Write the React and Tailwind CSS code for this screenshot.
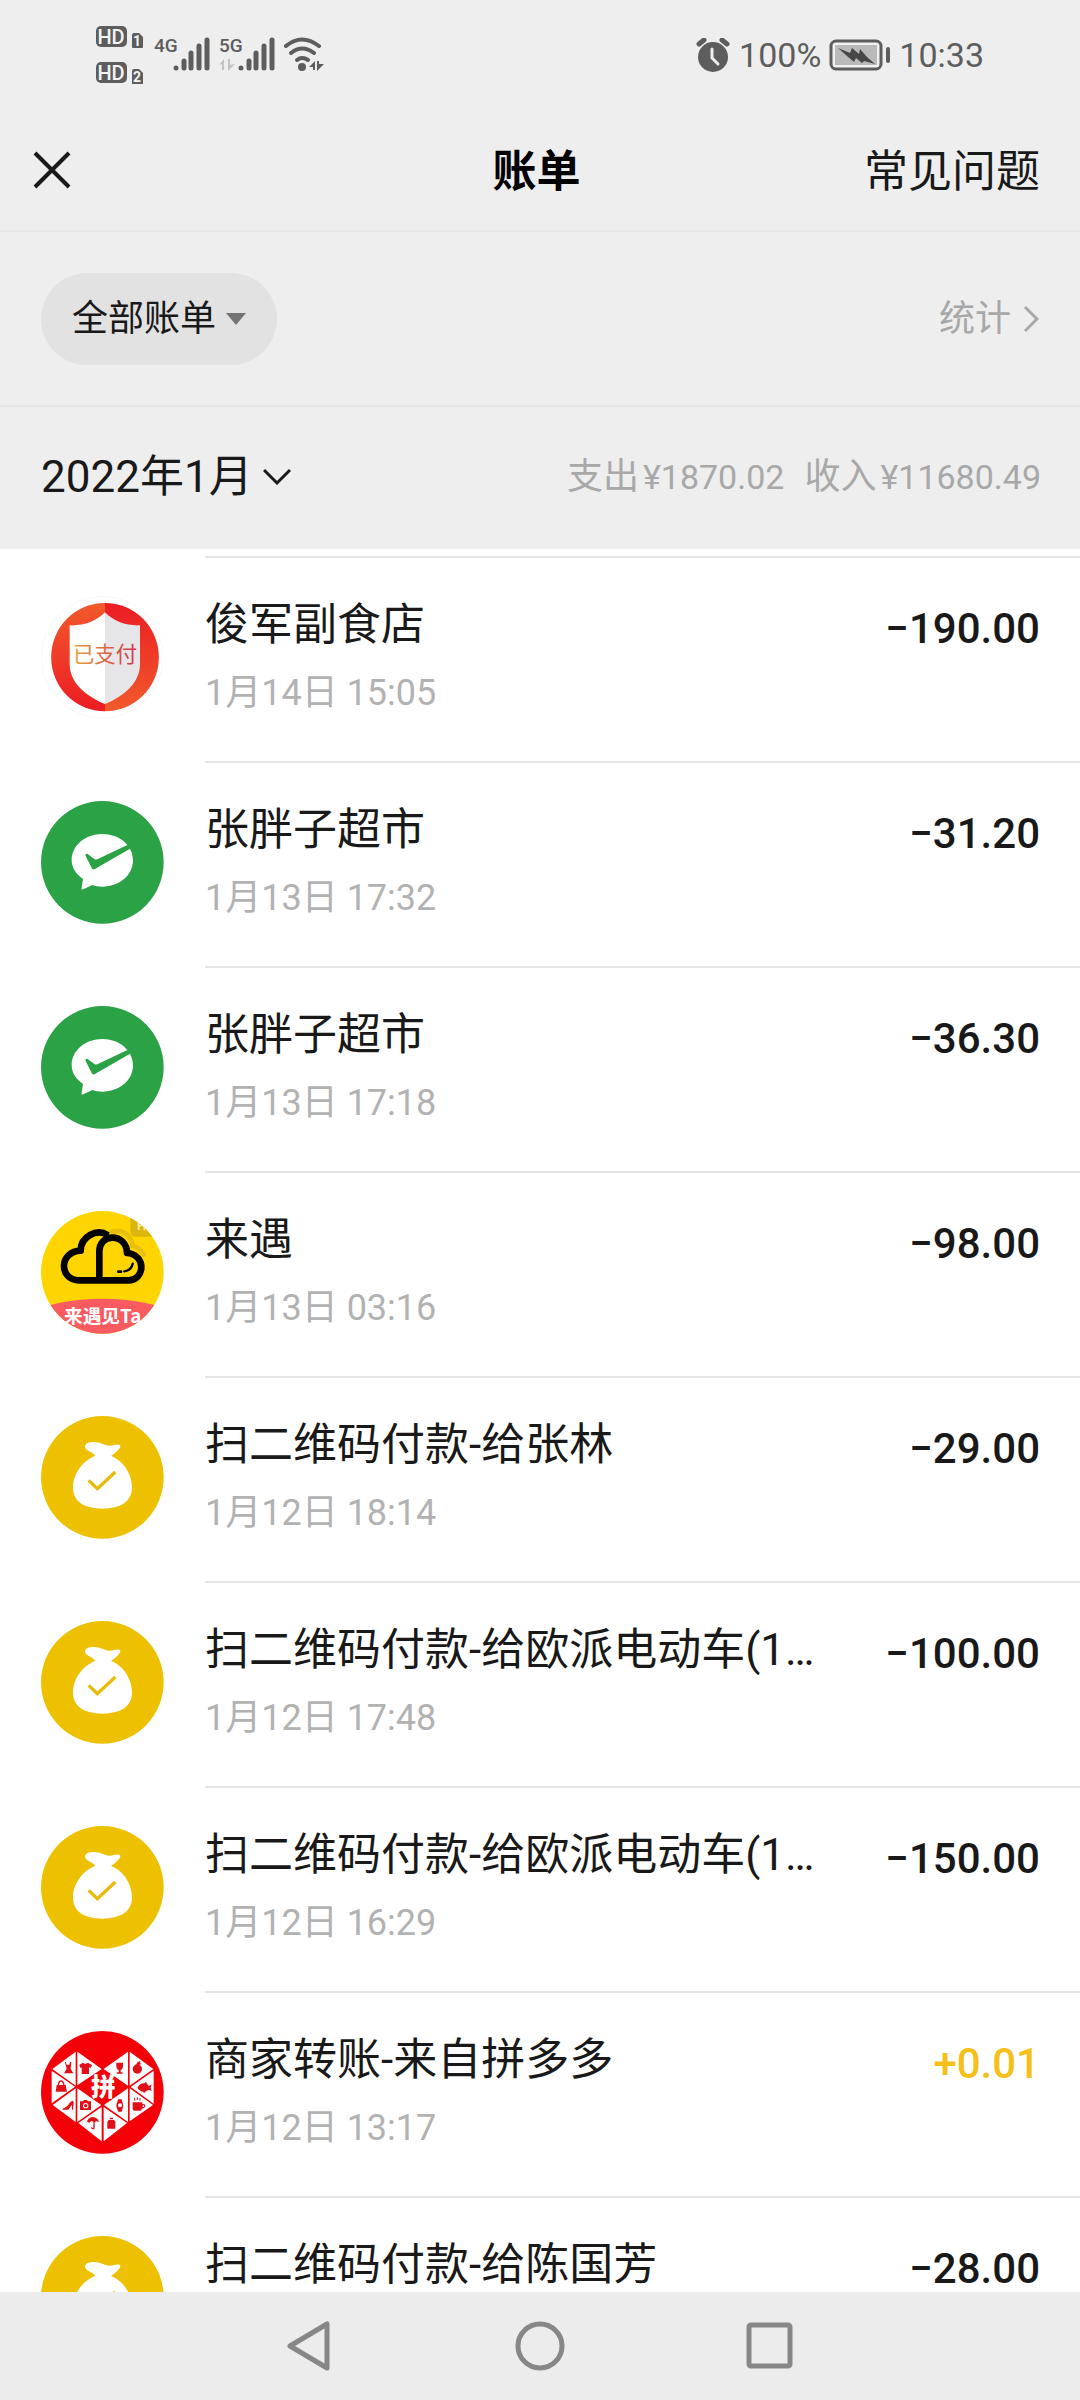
import React from "react";

const bills = [
  { icon: "shield", name: "俊军副食店", time: "1月14日 15:05", amount: "−190.00" },
  { icon: "pay", name: "张胖子超市", time: "1月13日 17:32", amount: "−31.20" },
  { icon: "pay", name: "张胖子超市", time: "1月13日 17:18", amount: "−36.30" },
  { icon: "cloud", name: "来遇", time: "1月13日 03:16", amount: "−98.00" },
  { icon: "bag", name: "扫二维码付款-给张林", time: "1月12日 18:14", amount: "−29.00" },
  { icon: "bag", name: "扫二维码付款-给欧派电动车(1…", time: "1月12日 17:48", amount: "−100.00" },
  { icon: "bag", name: "扫二维码付款-给欧派电动车(1…", time: "1月12日 16:29", amount: "−150.00" },
  { icon: "heart", name: "商家转账-来自拼多多", time: "1月12日 13:17", amount: "+0.01", income: true },
  { icon: "bag", name: "扫二维码付款-给陈国芳", amount: "−28.00" },
];

const CJK = "Noto Sans CJK SC, sans-serif";

function ShieldIcon() {
  return (
    <svg viewBox="33 46 369 369" className="size-full" aria-hidden="true">
      <defs>
        <linearGradient id="ringL" x1="0" y1="0" x2="0" y2="1">
          <stop offset="0" stopColor="#f15a2b" />
          <stop offset="1" stopColor="#ec1c24" />
        </linearGradient>
        <linearGradient id="ringR" x1="0" y1="0" x2="0" y2="1">
          <stop offset="0" stopColor="#ec1c24" />
          <stop offset="1" stopColor="#f15a2b" />
        </linearGradient>
        <linearGradient id="paid" x1="0" y1="0" x2="1" y2="0">
          <stop offset="0" stopColor="#e9a13c" />
          <stop offset="1" stopColor="#d2304c" />
        </linearGradient>
      </defs>
      <circle cx="217" cy="230" r="183" fill="#fff" stroke="#f3f3f3" strokeWidth="2" />
      <path d="M225 67a161 162 0 0 0 0 325z" fill="url(#ringL)" />
      <path d="M225 67a161 162 0 0 1 0 325z" fill="url(#ringR)" />
      <path d="M225 95C200 122 160 136 119 134V250C119 305 165 345 225 370z" fill="#fff" />
      <path d="M225 95C250 122 290 136 330 134V250C330 305 285 345 225 370z" fill="#e6e6e8" />
      <text x="225" y="244" textAnchor="middle" fontSize="64" fontFamily={CJK} fill="url(#paid)">已支付</text>
    </svg>
  );
}

function PayIcon() {
  return (
    <svg viewBox="33 33 369 369" className="size-full" aria-hidden="true">
      <circle cx="217" cy="217" r="184" fill="#2ba245" />
      <path d="M217 132C268 132 309 166 309 211S268 290 217 290C206 290 196 288 187 285L160 298C155 300 154 297 155 293L159 267C138 253 125 233 125 211C125 166 166 132 217 132z" fill="#fff" />
      <path d="M167 198C165 192 170 190 174 193L193 207C196 209 199 209 202 208L292 165L304 174L196 236C191 240 187 238 185 234z" fill="#2ba245" />
    </svg>
  );
}

function BagIcon() {
  return (
    <svg viewBox="33 33 369 369" className="size-full" aria-hidden="true">
      <circle cx="217" cy="217" r="184" fill="#edc100" />
      <path d="M196 153C190 142 166 137 165 126C164 115 178 111 192 111C212 111 222 121 238 122C250 122 258 118 268 119C272 120 272 124 269 129C264 139 252 146 243 153C278 165 306 206 306 247C306 291 270 311 217 311S129 291 129 247C129 206 160 165 196 153z" fill="#fff" />
      <path d="M176 226L202 251L256 201" fill="none" stroke="#e6bb0c" strokeWidth="10" />
    </svg>
  );
}

function CloudIcon() {
  return (
    <svg viewBox="33 33 369 369" className="size-full" aria-hidden="true">
      <clipPath id="cloudClip"><circle cx="217" cy="217" r="184" /></clipPath>
      <g clipPath="url(#cloudClip)">
        <rect x="33" y="33" width="369" height="369" fill="#ffd500" />
        <path d="M240 98C275 82 306 105 308 138C325 142 338 152 343 170" fill="none" stroke="#e8bf0c" strokeWidth="14" />
        <path d="M301 33V92Q301 110 320 110H402V33z" fill="#dcb60c" />
        <text x="322" y="91" fontSize="32" fontWeight="700" fontFamily="Roboto, sans-serif" fill="#fff3b0">Fr</text>
        <ellipse cx="217" cy="455" rx="330" ry="159" fill="#f95b60" />
        <path d="M234 106C200 84 152 110 152 152C122 153 102 173 102 198C102 224 122 241 146 241H296C318 241 334 223 334 201C334 179 317 161 291 159C291 131 271 113 247 113C224 113 208 130 208 154V241" fill="none" stroke="#000" strokeWidth="20" strokeLinejoin="round" />
        <path d="M283 214Q304 211 308 191" fill="none" stroke="#000" strokeWidth="7" strokeLinecap="round" />
        <path d="M265 215h8" stroke="#000" strokeWidth="8" strokeLinecap="round" />
        <text x="218" y="369" textAnchor="middle" fontSize="56" fontWeight="700" fontFamily={CJK} fill="#fff">来遇见Ta</text>
      </g>
    </svg>
  );
}

function HeartIcon() {
  return (
    <svg viewBox="33 36 369 369" className="size-full" aria-hidden="true">
      <circle cx="217" cy="220" r="184" fill="#f40009" />
      <g fill="#fff">
        <path d="M137 98V200L67 150zM142 98V199L215 150zM65 155V253L135 203zM137 208V309L68 258zM142 208V309L214 258zM215 264V367L145 312z" />
        <path d="M294 98V200L221 150zM299 98V200L370 150zM371 155V254L302 204zM299 208V307L369 258zM294 208V309L222 258zM221 264V367L291 312z" />
      </g>
      <text x="220" y="232" textAnchor="middle" fontSize="74" fontWeight="900" fontFamily={CJK} fill="#fff">拼</text>
      <g fill="#e0101a">
        <path d="M108 129l2 8h8l2-8h4l-2 20 8 14h-28l8-14-5-20z" />
        <path d="M158 131l8 4 8-4 12 7-4 9-5-2v20h-22v-20l-4 2-3-9z" />
        <path d="M80 198h27l4 20H77z" />
        <path d="M85 200q1-14 8-14t9 14" fill="none" stroke="#e0101a" strokeWidth="4" />
        <path d="M128 245l3 4-2 23h-3l-1-14-10 14H97q0-5 7-6c12-5 13-17 24-21z" />
        <path d="M150 247h9l3-4h9l3 4h9v26h-33z" />
        <path d="M171 309q2-14 17-15q16 1 19 15l-7-2-6 2v17q0 6-6 5t-5-6h3q2 3 4 1v-18l-6-2-6 5z" />
        <path d="M236 303h16l4 5v21h-24v-21zM239 296h10v5h-10z" />
        <path d="M264 241h11l2 7q5 11 0 23l-2 7h-11l-2-7q-6-12 0-23z" />
        <path d="M308 250h29v5q10-1 9 6t-10 8q-1 6-6 6h-16q-6 0-6-6z" />
        <path d="M314 245v-8M322 243v-8M330 245v-8" stroke="#e0101a" strokeWidth="3" />
        <path d="M322 206q9-15 22-13l4-5 3 6 5 7 9-5-3 10 3 10-9-4-10 6-3 4-4-4q-10-1-17-12z" />
        <path d="M259 131h20q2 18-7 22v7h6v4h-18v-4h6v-7q-9-4-7-22z" />
        <circle cx="322" cy="150" r="14" />
        <path d="M319 139q0-12 13-13l-3 6 6 2q-7 5-14 4z" />
      </g>
      <g fill="#fff">
        <circle cx="167" cy="260" r="8" />
        <circle cx="270" cy="259" r="6" />
        <path d="M338 259h4v5h-4z" />
      </g>
      <circle cx="167" cy="260" r="5" fill="#e0101a" />
    </svg>
  );
}

const icons = { shield: ShieldIcon, pay: PayIcon, cloud: CloudIcon, bag: BagIcon, heart: HeartIcon };

function HdIcon() {
  return (
    <svg width="48" height="58" viewBox="0 0 48 58" aria-hidden="true">
      {[0, 36].map((y, i) => (
        <g key={y}>
          <rect x="0" y={y} width="31" height="21" rx="5" fill="#5d5d5d" />
          <text x="15" y={y + 18} textAnchor="middle" fontSize="20" fontWeight="500" fontFamily="Roboto, sans-serif" fill="#f4f4f4">HD</text>
          <path d={i ? "M38 43h5l4 4v12H36V45q0-2 2-2z" : "M38 7h5l4 4v10q0 1-1 1H37q-1 0-1-1V9q0-2 2-2z"} fill="#5d5d5d" />
          <text x="41" y={y + 20} textAnchor="middle" fontSize="14" fontWeight="700" fontFamily="Roboto, sans-serif" fill="#f4f4f4">{i + 1}</text>
        </g>
      ))}
    </svg>
  );
}

function SignalIcon({ label, arrows }) {
  const bars = [[22, 42], [30, 35], [37, 27], [45, 20], [53, 14]];
  return (
    <svg width="56" height="58" viewBox="0 0 56 58" aria-hidden="true">
      <text x="0" y="26" fontSize="19" fontWeight="500" fontFamily="Roboto, sans-serif" fill="#5d5d5d">{label}</text>
      {arrows && <path d="M0 39l5-6v11H3v-6zM9 33h2v6l5-1-7 7z" fill="#c2c2c2" />}
      {bars.map(([x, y]) => (
        <path key={x} d={`M${x} ${y}V42`} stroke="#5d5d5d" strokeWidth="5" strokeLinecap="round" />
      ))}
    </svg>
  );
}

function WifiIcon() {
  return (
    <svg width="42" height="58" viewBox="0 0 42 58" aria-hidden="true">
      <g fill="none" stroke="#5d5d5d" strokeWidth="4" strokeLinecap="round">
        <path d="M3 10Q19 -3 36 10" />
        <path d="M8 17Q19 8 31 17" />
        <path d="M14 24Q19 20 25 24" />
      </g>
      <circle cx="19" cy="31" r="4" fill="#5d5d5d" />
      <path d="M26 31l6-6v9h-2v-3zM34 25h2v3h5l-7 7z" fill="#5d5d5d" />
    </svg>
  );
}

function StatusBar() {
  return (
    <div className="flex h-[110px] shrink-0 justify-between pl-24 pr-[96px] pt-[26px] text-[#5d5d5d]">
      <div className="flex items-start">
        <HdIcon />
        <div className="ml-[10px] flex gap-[9px]">
          <SignalIcon label="4G" />
          <SignalIcon label="5G" arrows />
        </div>
        <div className="ml-2 mt-[10px]"><WifiIcon /></div>
      </div>
      <div className="flex h-[58px] items-center text-[34px] leading-[40px]">
        <svg width="36" height="34" viewBox="0 0 36 34" aria-hidden="true">
          <circle cx="18" cy="19" r="15" fill="#5d5d5d" />
          <path d="M4 6l5-4M27 2l5 4" stroke="#5d5d5d" strokeWidth="5" strokeLinecap="round" />
          <path d="M17 11v9l6 6" fill="none" stroke="#eee" strokeWidth="3" strokeLinecap="round" />
        </svg>
        <span className="ml-2">100%</span>
        <svg className="mx-2" width="62" height="32" viewBox="0 0 62 32" aria-hidden="true">
          <rect x="2" y="2" width="50" height="28" rx="5" fill="#f1f1f1" stroke="#5d5d5d" strokeWidth="3" />
          <rect x="6" y="6" width="42" height="20" fill="#bababa" />
          <path d="M9 9l12 5 2-5 7 6 1-5 7 8 8 7-11-3-2 2-6-5-2 4-7-6z" fill="#474747" />
          <path d="M59 10v12" stroke="#5d5d5d" strokeWidth="4" strokeLinecap="round" />
        </svg>
        <span>10:33</span>
      </div>
    </div>
  );
}

function BillRow({ bill }) {
  const Icon = icons[bill.icon];
  return (
    <li className="flex h-[205px] shrink-0 gap-[41px] pl-[41px]">
      <div className="mt-10 size-[123px] shrink-0"><Icon /></div>
      <div className="flex min-w-0 flex-1 items-start justify-between border-t-2 border-[#e5e5e5] pr-10 pt-9">
        <div className="min-w-0">
          <p className="truncate text-[44px] leading-[62px] text-[#191919]">{bill.name}</p>
          {bill.time && <p className="mt-3 text-[36px] leading-[50px] text-[#b2b2b2]">{bill.time}</p>}
        </div>
        <p className={bill.income ? "mt-3 shrink-0 text-[42px] font-medium leading-[46px] text-[#f5c019]" : "mt-3 shrink-0 text-[42px] font-medium leading-[46px] text-[#191919]"}>
          {bill.amount}
        </p>
      </div>
    </li>
  );
}

export default function App() {
  return (
    <div className="flex h-screen flex-col overflow-hidden bg-white font-[Roboto,'Noto_Sans_CJK_SC',sans-serif]" lang="zh-CN">
      <header className="shrink-0 bg-[#eeeeee]">
        <StatusBar />
        <div className="grid h-[122px] grid-cols-3 items-center border-b-2 border-[#e6e6e6] pl-[33px] pr-10 text-[44px] leading-[60px]">
          <button type="button" aria-label="关闭" className="justify-self-start">
            <svg width="38" height="38" viewBox="0 0 38 38" aria-hidden="true">
              <path d="M2 2l34 34M36 2L2 36" stroke="#191919" strokeWidth="4" />
            </svg>
          </button>
          <h1 className="justify-self-center pt-1 font-bold text-black">账单</h1>
          <a href="#faq" className="justify-self-end whitespace-nowrap pt-1 text-[#191919]">常见问题</a>
        </div>
        <div className="flex h-[175px] items-center justify-between border-b-2 border-[#e6e6e6] pl-[41px] pr-[41px] text-[36px] leading-[50px]">
          <button type="button" className="flex h-[92px] items-center gap-[10px] rounded-full bg-[#e2e2e2] px-[31px] text-[#191919]">
            全部账单
            <svg width="20" height="12" viewBox="0 0 20 12" aria-hidden="true"><path d="M0 0h20L10 12z" fill="#737373" /></svg>
          </button>
          <a href="#stats" className="flex items-center gap-3 text-[#a8a8a8]">
            统计
            <svg width="16" height="28" viewBox="0 0 16 28" aria-hidden="true"><path d="M2 2l12 12L2 26" fill="none" stroke="#a8a8a8" strokeWidth="3" /></svg>
          </a>
        </div>
        <div className="flex h-[142px] items-center justify-between pb-[2px] pl-[41px] pr-[39px]">
          <button type="button" className="flex items-center gap-[10px] text-[44px] leading-[60px] text-[#191919]">
            2022年1月
            <svg width="28" height="18" viewBox="0 0 28 18" aria-hidden="true"><path d="M1 2l13 13L27 2" fill="none" stroke="#191919" strokeWidth="3" /></svg>
          </button>
          <p className="flex gap-5 text-[34px] leading-[50px] text-[#a8a8a8]">
            <span className="flex gap-1"><span className="text-[36px]">支出</span>¥1870.02</span>
            <span className="flex gap-1"><span className="text-[36px]">收入</span>¥11680.49</span>
          </p>
        </div>
      </header>
      <main className="min-h-0 flex-1 overflow-hidden pt-[7px]">
        <ul>{bills.map((b, i) => <BillRow key={i} bill={b} />)}</ul>
      </main>
      <nav className="flex h-[108px] shrink-0 items-center justify-center gap-[180px] bg-[#ececec]">
        <button type="button" aria-label="返回">
          <svg width="50" height="50" viewBox="0 0 50 50" fill="none" stroke="#878787" strokeWidth="5" strokeLinejoin="round" aria-hidden="true"><path d="M42 3v44L5 25z" /></svg>
        </button>
        <button type="button" aria-label="主屏幕">
          <svg width="50" height="50" viewBox="0 0 50 50" fill="none" stroke="#878787" strokeWidth="5" aria-hidden="true"><circle cx="25" cy="25" r="22" /></svg>
        </button>
        <button type="button" aria-label="最近任务">
          <svg width="50" height="50" viewBox="0 0 50 50" fill="none" stroke="#878787" strokeWidth="5" aria-hidden="true"><rect x="4" y="4" width="41" height="41" rx="2" /></svg>
        </button>
      </nav>
    </div>
  );
}
